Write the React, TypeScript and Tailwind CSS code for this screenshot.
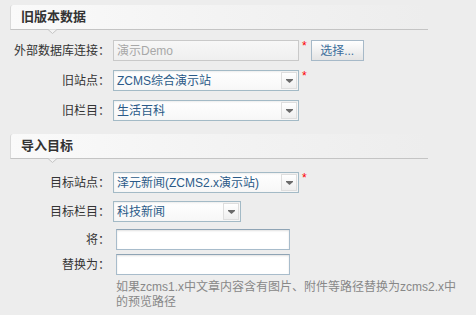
import { FC, ReactNode } from 'react'

const font = '"Liberation Sans", "Noto Sans CJK SC", sans-serif'

const SectionHeader: FC<{ title: string; className?: string }> = ({ title, className }) => (
  <div className={`relative ml-[10px] w-[418px] h-[25px] border-l border-b border-l-[#d9d9d9] border-b-[#c4c4c4] rounded-tl-[3px] bg-gradient-to-r from-[#fafafa] via-[#f3f3f3] to-[#ededed] ${className ?? ''}`}>
    <div className="pl-[10px] pt-[4px] text-[13px] leading-[16px] font-bold text-[#333]">{title}</div>
    <svg className="absolute left-[37px] top-[24px]" width="9" height="5" viewBox="0 0 9 5">
      <path d="M0 0.5 L4.5 4.5 L9 0.5" fill="#f3f3f3" stroke="#c4c4c4" />
    </svg>
  </div>
)

const Row: FC<{ label: string; className?: string; children: ReactNode }> = ({ label, className, children }) => (
  <div className={`flex items-center h-[21px] ${className ?? ''}`}>
    <div className="w-[110px] text-right text-[12px] text-[#333] whitespace-nowrap">{label}</div>
    {children}
  </div>
)

const Star = () => <span className="ml-[3px] self-start mt-[-1px] text-[12px] leading-[14px] text-[#ff0000]">*</span>

const Select: FC<{ value: string; width: string }> = ({ value, width }) => (
  <div className={`ml-[3px] h-[21px] ${width} flex items-center border border-[#a3bac6] bg-gradient-to-b from-white to-[#f7f7f7] shadow-[inset_0_1px_2px_rgba(0,0,0,0.08)]`}>
    <span className="flex-1 pl-[3px] text-[12px] text-[#2b5a88] whitespace-nowrap overflow-hidden">{value}</span>
    <div className="mr-[1px] w-[16px] h-[17px] flex items-center justify-center border border-[#dedede] bg-gradient-to-b from-white to-[#efefef]">
      <svg width="7" height="4" viewBox="0 0 7 4">
        <rect x="0" y="0" width="7" height="1" fill="#6b6b6b" />
        <path d="M0 1 H7 L3.5 4 Z" fill="#6b6b6b" />
      </svg>
    </div>
  </div>
)

const TextInput = () => (
  <div className="ml-[6px] w-[174px] h-[21px] border border-[#a8bccb] border-t-[#8fa4b5] bg-white shadow-[inset_0_1px_2px_rgba(0,0,0,0.12)]" />
)

export default function App() {
  return (
    <div className="w-[476px] h-[315px] bg-[#ededed] overflow-hidden flex flex-col pt-[5px]" style={{ fontFamily: font }}>
      <SectionHeader title="旧版本数据" />

      <Row label="外部数据库连接：" className="mt-[10px]">
        <div className="ml-[3px] w-[186px] h-[21px] flex items-center border border-[#c9c9c9] bg-gradient-to-b from-[#f7f7f7] to-[#efefef] pl-[3px] text-[12px] text-[#a8a8a8]">
          演示Demo
        </div>
        <Star />
        <button className="ml-[4px] w-[53px] h-[21px] border border-[#a6b9c8] bg-gradient-to-b from-white to-[#e4e4e4] text-[12px] text-[#3c6e9c] leading-[18px]">
          选择...
        </button>
      </Row>

      <Row label="旧站点：" className="mt-[9px]">
        <Select value="ZCMS综合演示站" width="w-[186px]" />
        <Star />
      </Row>

      <Row label="旧栏目：" className="mt-[9px]">
        <Select value="生活百科" width="w-[186px]" />
      </Row>

      <SectionHeader title="导入目标" className="mt-[13px] h-[24px]" />

      <Row label="目标站点：" className="mt-[13px]">
        <Select value="泽元新闻(ZCMS2.x演示站)" width="w-[186px]" />
        <Star />
      </Row>

      <Row label="目标栏目：" className="mt-[8px]">
        <Select value="科技新闻" width="w-[128px]" />
      </Row>

      <Row label="将：" className="mt-[7px]">
        <TextInput />
      </Row>

      <Row label="替换为：" className="mt-[4px]">
        <TextInput />
      </Row>

      <div className="ml-[116px] mt-[5px] text-[12px] leading-[15px] text-[#888]">
        如果zcms1.x中文章内容含有图片、附件等路径替换为zcms2.x中
        <br />
        的预览路径
      </div>
    </div>
  )
}
